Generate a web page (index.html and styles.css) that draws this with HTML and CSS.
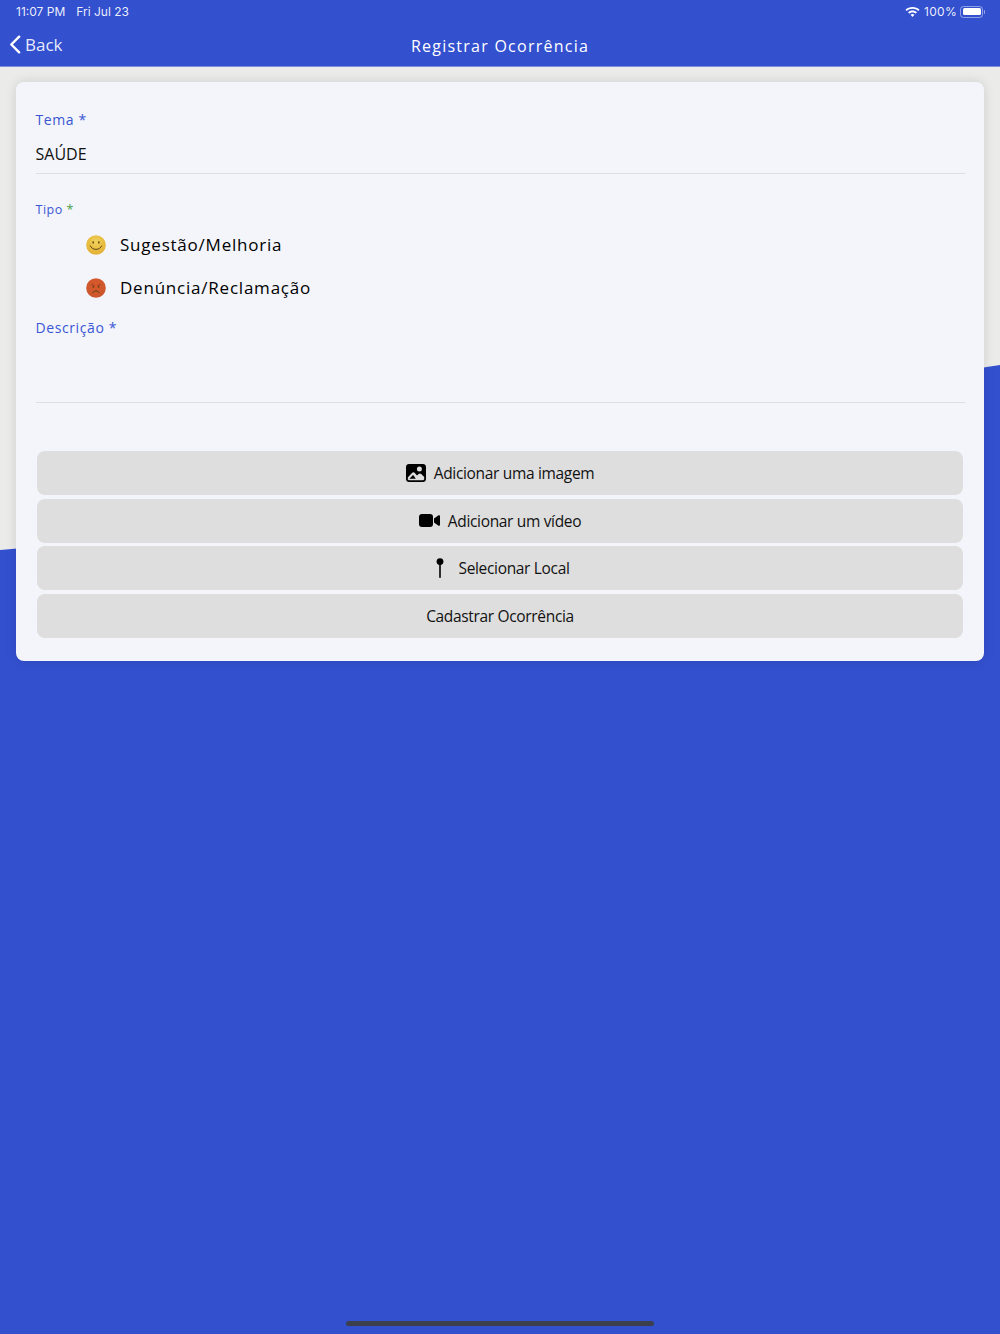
FILE: index.html
```html
<!DOCTYPE html>
<html lang="en">
<head>
    <meta charset="UTF-8">
    <meta name="viewport" content="width=device-width, initial-scale=1.0">
    <title>Registrar Ocorrência</title>
    <link rel="stylesheet" href="styles.css">
</head>
<body>
    <div class="app-header">
        <div class="status-bar">
            <div class="status-left">
                <span>11:07 PM</span>
                <span>Fri Jul 23</span>
            </div>
            <div class="status-right">
                <svg class="wifi-icon" viewBox="0 0 16 12">
                    <path d="M8 0.6C5 0.6 2.4 1.7 0.5 3.6L1.9 5C3.5 3.5 5.6 2.6 8 2.6S12.5 3.5 14.1 5L15.5 3.6C13.6 1.7 11 0.6 8 0.6Z" />
                    <path d="M8 4.4C6.1 4.4 4.5 5.1 3.2 6.3L4.6 7.7C5.5 6.9 6.7 6.4 8 6.4S10.5 6.9 11.4 7.7L12.8 6.3C11.5 5.1 9.9 4.4 8 4.4Z" />
                    <path d="M8 8.2C7.2 8.2 6.5 8.5 5.9 9L8 11.4L10.1 9C9.5 8.5 8.8 8.2 8 8.2Z" />
                </svg>
                <span class="battery-text">100%</span>
                <div class="battery">
                    <div class="battery-fill"></div>
                </div>
                <div class="battery-tip"></div>
            </div>
        </div>
        <div class="nav-bar">
            <div class="nav-back">
                <svg class="back-icon" viewBox="0 0 13 20">
                    <path d="M11 1.5L2.5 10L11 18.5" />
                </svg>
                <span>Back</span>
            </div>
            <div class="nav-title">Registrar Ocorrência</div>
        </div>
    </div>

    <div class="page-body">
        <svg class="wave" viewBox="0 0 1000 1267" preserveAspectRatio="none">
            <path d="M0 483C200 468 700 345 1000 298V1267H0Z" />
        </svg>

        <div class="form-card">
            <div class="field-label tema-label">Tema *</div>
            <div class="field-value">SAÚDE</div>

            <div class="tipo-label">Tipo <span class="required">*</span></div>
            <div class="tipo-row">
                <svg class="emoji" viewBox="0 0 20 20">
                    <defs>
                        <radialGradient id="smileFill" cx="50%" cy="35%" r="70%">
                            <stop offset="0%" stop-color="#f0d25a" />
                            <stop offset="100%" stop-color="#e2ac2f" />
                        </radialGradient>
                    </defs>
                    <circle fill="url(#smileFill)" cx="10" cy="10" r="9.8" />
                    <ellipse class="eye" cx="7.2" cy="7.4" rx="0.8" ry="1.2" />
                    <ellipse class="eye" cx="12.8" cy="7.4" rx="0.8" ry="1.2" />
                    <path class="mouth" d="M4.4 11C6 15.6 14 15.6 15.6 11" />
                </svg>
                <span>Sugestão/Melhoria</span>
            </div>
            <div class="tipo-row">
                <svg class="emoji" viewBox="0 0 20 20">
                    <defs>
                        <radialGradient id="angryFill" cx="50%" cy="35%" r="70%">
                            <stop offset="0%" stop-color="#d9592a" />
                            <stop offset="100%" stop-color="#c9552f" />
                        </radialGradient>
                    </defs>
                    <circle fill="url(#angryFill)" cx="10" cy="10" r="9.8" />
                    <path class="brow" d="M5.4 6.4L8.4 7.4M14.6 6.4L11.6 7.4" />
                    <circle class="eye" cx="7.4" cy="8.8" r="0.9" />
                    <circle class="eye" cx="12.6" cy="8.8" r="0.9" />
                    <path class="mouth" d="M6.8 14.6C8 12.2 12 12.2 13.2 14.6" />
                </svg>
                <span>Denúncia/Reclamação</span>
            </div>

            <div class="field-label descricao-label">Descrição *</div>
            <div class="descricao-input"></div>

            <div class="button-list">
                <div class="form-button">
                    <svg class="btn-icon image-icon" viewBox="0 0 20 18">
                        <path fill-rule="evenodd" d="M3 0H17C18.7 0 20 1.3 20 3V15C20 16.7 18.7 18 17 18H3C1.3 18 0 16.7 0 15V3C0 1.3 1.3 0 3 0ZM13.4 2.6A2.5 2.5 0 1 0 13.4 7.6A2.5 2.5 0 1 0 13.4 2.6ZM1.8 13.4L6.2 8.8C7 8 8 8 8.8 8.9L11 11.4L12.6 10C13.4 9.3 14.4 9.3 15.2 10L18.2 13V15C18.2 15.7 17.7 16.2 17 16.2H3C2.3 16.2 1.8 15.7 1.8 15ZM3.4 14.8H9.8L7.6 11.6C7.3 11.2 6.8 11.2 6.5 11.6Z" />
                    </svg>
                    <span>Adicionar uma imagem</span>
                </div>
                <div class="form-button">
                    <svg class="btn-icon video-icon" viewBox="0 0 21 13">
                        <rect x="0" y="0" width="14" height="13" rx="3" />
                        <path d="M15 4.6L19.2 1.4C20 0.9 21 1.3 21 2.2V10.8C21 11.7 20 12.1 19.2 11.6L15 8.4Z" />
                    </svg>
                    <span>Adicionar um vídeo</span>
                </div>
                <div class="form-button">
                    <svg class="btn-icon pin-icon" viewBox="0 0 8 20">
                        <circle cx="4" cy="3.6" r="3.4" />
                        <rect x="3.2" y="5" width="1.6" height="15" rx="0.8" />
                    </svg>
                    <span>Selecionar Local</span>
                </div>
                <div class="form-button">
                    <span>Cadastrar Ocorrência</span>
                </div>
            </div>
        </div>
    </div>

    <div class="home-indicator"></div>
</body>
</html>
```

FILE: styles.css
```css
* {
    margin: 0;
    padding: 0;
    box-sizing: border-box;
}

body {
    width: 1000px;
    height: 1334px;
    overflow: hidden;
    position: relative;
    background: #ebebea;
    font-family: "Open Sans", "Noto Sans", sans-serif;
    color: #111;
}

.app-header {
    height: 67px;
    background: #3350cf;
    color: white;
    border-bottom: 1px solid #7f8fdc;
}

.status-bar {
    height: 24px;
    padding: 0 15px 1px 16px;
    display: flex;
    align-items: center;
    justify-content: space-between;
    font-family: Inter, Roboto, sans-serif;
    font-size: 12px;
    color: rgba(255, 255, 255, 0.92);
}

.status-left {
    display: flex;
    gap: 11px;
}

.status-right {
    display: flex;
    align-items: center;
}

.wifi-icon {
    width: 15px;
    height: 12px;
    fill: white;
    margin-right: 4px;
}

.battery-text {
    letter-spacing: 0.3px;
}

.battery {
    width: 23px;
    height: 12px;
    margin-left: 3px;
    padding: 1.5px;
    border: 1px solid rgba(255, 255, 255, 0.45);
    border-radius: 3.5px;
}

.battery-fill {
    height: 100%;
    background: white;
    border-radius: 1.5px;
}

.battery-tip {
    width: 1.5px;
    height: 4px;
    margin-left: 0.5px;
    background: rgba(255, 255, 255, 0.5);
    border-radius: 0 1px 1px 0;
}

.nav-bar {
    height: 42px;
    position: relative;
    display: flex;
    align-items: center;
    justify-content: center;
    padding-top: 2px;
}

.nav-back {
    position: absolute;
    left: 9px;
    top: -1px;
    height: 100%;
    display: flex;
    align-items: center;
    gap: 4px;
    font-size: 17px;
    color: rgba(255, 255, 255, 0.9);
}

.back-icon {
    width: 12px;
    height: 19px;
    fill: none;
    stroke: white;
    stroke-width: 2.6;
    stroke-linecap: round;
    stroke-linejoin: round;
}

.nav-title {
    font-size: 16px;
    font-weight: 500;
    letter-spacing: 1.25px;
    color: white;
}

.page-body {
    position: relative;
    padding: 15px 16px 0;
}

.wave {
    position: absolute;
    left: 0;
    top: 0;
    width: 1000px;
    height: 1267px;
    fill: #3350cf;
}

.form-card {
    position: relative;
    height: 579px;
    padding: 28px 19.5px 0;
    background: #f3f5fa;
    border-radius: 8px;
    box-shadow: 0 0 12px rgba(0, 0, 0, 0.12);
}

.field-label {
    font-size: 14px;
    line-height: 20px;
    font-weight: 500;
    letter-spacing: 0.6px;
    color: #3a56d4;
}

.field-value {
    height: 37px;
    margin-top: 7px;
    padding-top: 6px;
    font-size: 16px;
    line-height: 22px;
    border-bottom: 1px solid #dcdee3;
}

.tipo-label {
    margin-top: 27px;
    font-size: 12.5px;
    line-height: 18px;
    letter-spacing: 0.5px;
    color: #3a56d4;
}

.required {
    color: #4ba34e;
}

.tipo-row {
    height: 43px;
    padding-left: 50.5px;
    display: flex;
    align-items: center;
    gap: 14px;
    font-size: 17px;
    font-weight: 500;
    letter-spacing: 0.78px;
    color: #000;
}

.tipo-label + .tipo-row {
    margin-top: 4px;
}

.emoji {
    width: 20px;
    height: 20px;
    flex: none;
}

.eye {
    fill: #5b4315;
}

.mouth {
    fill: none;
    stroke: #5b4315;
    stroke-width: 1;
    stroke-linecap: round;
}

.brow {
    fill: none;
    stroke: #8a3a1c;
    stroke-width: 0.8;
    stroke-linecap: round;
}

.descricao-label {
    margin-top: 9px;
}

.descricao-input {
    height: 65px;
    border-bottom: 1px solid #dcdee3;
}

.button-list {
    margin: 48px 1.5px 0;
    display: flex;
    flex-direction: column;
    gap: 3.7px;
}

.form-button {
    height: 44px;
    background: #dedede;
    border-radius: 8px;
    display: flex;
    align-items: center;
    justify-content: center;
    gap: 8px;
    font-size: 15.5px;
    letter-spacing: -0.33px;
}

.btn-icon {
    fill: #000;
    flex: none;
}

.image-icon {
    width: 20px;
    height: 18px;
}

.video-icon {
    width: 21px;
    height: 13px;
}

.pin-icon {
    width: 8px;
    height: 20px;
    margin: 0 6px;
}

.home-indicator {
    position: absolute;
    left: 346px;
    top: 1321px;
    width: 308px;
    height: 5px;
    background: #3c3f4c;
    border-radius: 3px;
}
```
